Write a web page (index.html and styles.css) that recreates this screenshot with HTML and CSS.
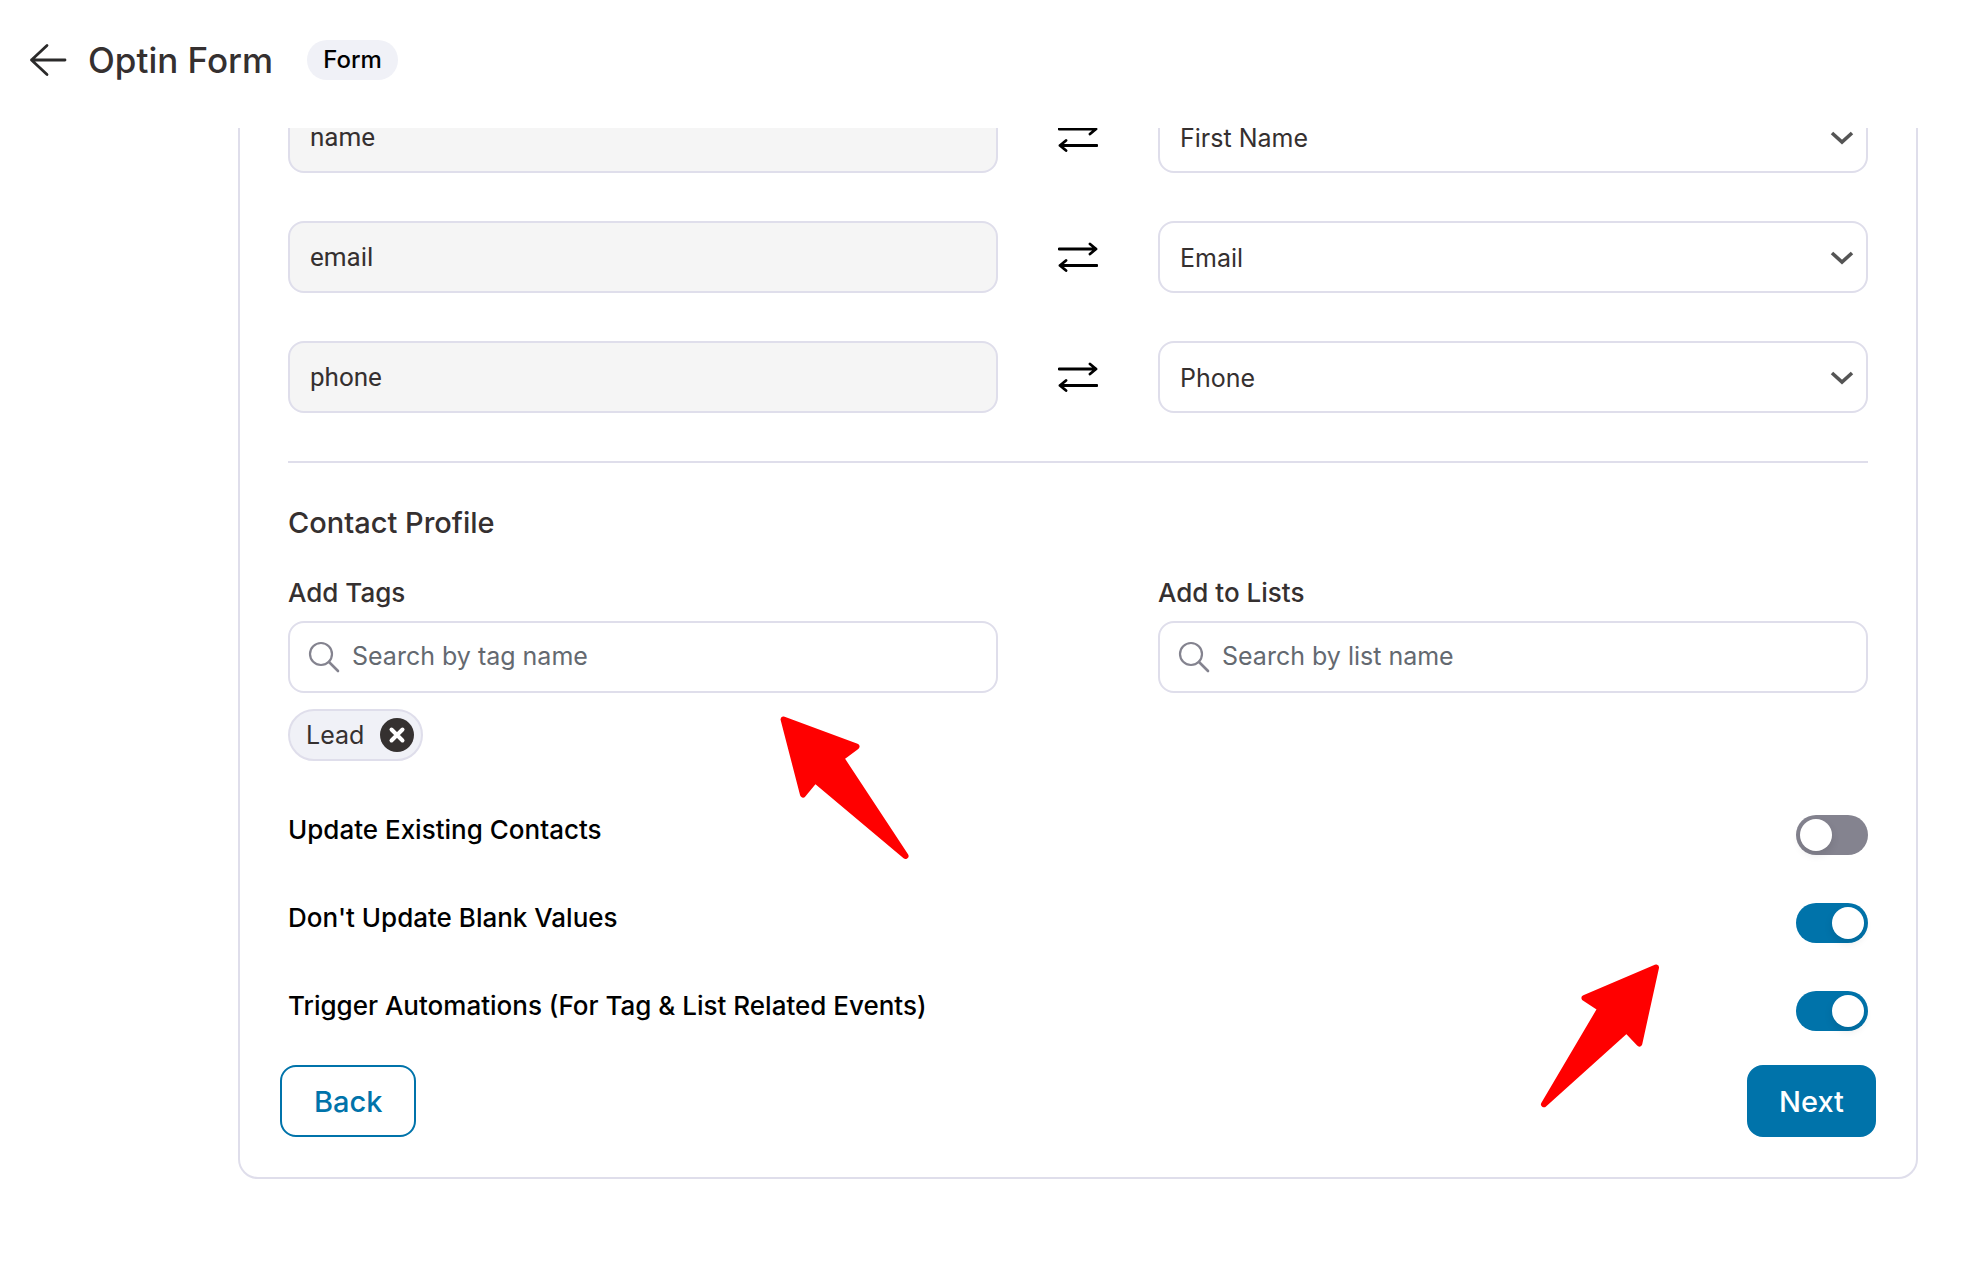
FILE: index.html
```html
<!DOCTYPE html>
<html lang="en">
<head>
<meta charset="utf-8">
<meta name="viewport" content="width=device-width, initial-scale=1">
<title>Optin Form</title>
<link rel="stylesheet" href="styles.css">
</head>
<body>
<svg class="sprite" aria-hidden="true">
  <symbol id="swap" viewBox="0 0 40 32">
    <path d="M1 8H38M32 3L38 8L32 13M39 24.500H2M8 19.500L2 24.500L8 29.500" fill="none" stroke="#000" stroke-width="2.800" stroke-linecap="round" stroke-linejoin="round"/>
  </symbol>
  <symbol id="chevron" viewBox="0 0 24 14">
    <path d="M2 2L12 11L22 2" fill="none" stroke="#555" stroke-width="3.600"/>
  </symbol>
  <symbol id="search" viewBox="0 0 32 32">
    <circle cx="13" cy="13" r="11" fill="none" stroke="#84838f" stroke-width="2.200"/>
    <path d="M21 21L30 30" fill="none" stroke="#84838f" stroke-width="2.600" stroke-linecap="round"/>
  </symbol>
</svg>
<header class="topbar">
  <button class="back-arrow" type="button" aria-label="Go back">
    <svg width="40" height="36" viewBox="0 0 40 36"><path d="M37 18H3.500M19 3.500L3.500 18L19 32.500" fill="none" stroke="#2b2a2a" stroke-width="2.800" stroke-linecap="round" stroke-linejoin="round"/></svg>
  </button>
  <h1 class="title">Optin Form</h1>
  <span class="badge">Form</span>
</header>
<main class="viewport">
  <form class="card">
    <div class="mapping">
      <div class="pair">
        <input class="field source" type="text" value="name" aria-label="Form field: name" disabled>
        <svg class="swap"><use href="#swap"/></svg>
        <div class="picker">
          <select class="field" aria-label="Contact field for name"><option>First Name</option></select>
          <svg class="chevron"><use href="#chevron"/></svg>
        </div>
      </div>
      <div class="pair">
        <input class="field source" type="text" value="email" aria-label="Form field: email" disabled>
        <svg class="swap"><use href="#swap"/></svg>
        <div class="picker">
          <select class="field" aria-label="Contact field for email"><option>Email</option></select>
          <svg class="chevron"><use href="#chevron"/></svg>
        </div>
      </div>
      <div class="pair">
        <input class="field source" type="text" value="phone" aria-label="Form field: phone" disabled>
        <svg class="swap"><use href="#swap"/></svg>
        <div class="picker">
          <select class="field" aria-label="Contact field for phone"><option>Phone</option></select>
          <svg class="chevron"><use href="#chevron"/></svg>
        </div>
      </div>
    </div>
    <section class="profile">
      <h2 class="section-title">Contact Profile</h2>
      <div class="lookups">
        <div class="lookup">
          <label class="label" for="tags">Add Tags</label>
          <div class="search">
            <input class="field" id="tags" type="text" placeholder="Search by tag name">
            <svg class="glass"><use href="#search"/></svg>
          </div>
          <div class="chip">
            <span>Lead</span>
            <button class="chip-remove" type="button" aria-label="Remove Lead">
              <svg width="34" height="34" viewBox="0 0 34 34"><circle cx="17" cy="17" r="17" fill="#353130"/><path d="M11.500 11.500L22.500 22.500M22.500 11.500L11.500 22.500" stroke="#fff" stroke-width="4" stroke-linecap="round"/></svg>
            </button>
          </div>
        </div>
        <div class="lookup">
          <label class="label" for="lists">Add to Lists</label>
          <div class="search">
            <input class="field" id="lists" type="text" placeholder="Search by list name">
            <svg class="glass"><use href="#search"/></svg>
          </div>
        </div>
      </div>
    </section>
    <div class="options">
      <div class="option"><label for="update">Update Existing Contacts</label><input class="toggle" id="update" type="checkbox"></div>
      <div class="option"><label for="blank">Don't Update Blank Values</label><input class="toggle" id="blank" type="checkbox" checked></div>
      <div class="option"><label for="trigger">Trigger Automations (For Tag &amp; List Related Events)</label><input class="toggle" id="trigger" type="checkbox" checked></div>
    </div>
    <div class="actions">
      <button class="button secondary" type="button">Back</button>
      <button class="button primary" type="button">Next</button>
    </div>
    <svg class="pointer pointer-tags" viewBox="776 712 136 152" aria-hidden="true"><path d="M783.600 719.500L856.500 746.500L841 758L905.500 856L815 780L803 794.500Z"/></svg>
    <svg class="pointer pointer-toggles" viewBox="1536 960 128 152" aria-hidden="true"><path d="M1656 967.500L1584.500 998L1600.500 1008.500L1544 1104.300L1626.500 1030L1639.300 1043.500Z"/></svg>
  </form>
</main>
</body>
</html>
```
FILE: styles.css
```css
* {
  box-sizing: border-box;
}

body {
  margin: 0;
  height: 100vh;
  display: flex;
  flex-direction: column;
  overflow: hidden;
  background: #fff;
  color: #353030;
  font-family: Inter, "Liberation Sans", sans-serif;
  font-size: 25px;
}

button,
input,
select {
  font: inherit;
}

.sprite {
  display: none;
}

.topbar {
  flex: none;
  height: 128px;
  padding: 0 28px 8px;
  display: flex;
  align-items: center;
}

.back-arrow {
  display: flex;
  padding: 0;
  border: 0;
  background: none;
}

.title {
  margin: 0 34px 0 20px;
  font-size: 35px;
  font-weight: 500;
}

.badge {
  padding: 0 16px;
  border-radius: 20px;
  background: #f0f1f7;
  color: #000;
  font-size: 24px;
  font-weight: 500;
  line-height: 40px;
}

/* The form is scrolled under the top bar. */
.viewport {
  flex: 1;
  min-height: 0;
  overflow: hidden;
}

.card {
  position: relative;
  margin: -77px 62px 0 238px;
  padding: 48px 48px 40px;
  border: 2px solid #dfdeeb;
  border-radius: 20px;
}

.mapping {
  display: grid;
  gap: 48px;
  padding-bottom: 48px;
  border-bottom: 2px solid #dfdeeb;
}

.pair {
  display: grid;
  grid-template-columns: 1fr 160px 1fr;
  align-items: center;
}

.field {
  width: 100%;
  height: 72px;
  padding: 0 20px;
  border: 2px solid #dfdeeb;
  border-radius: 16px;
  background: #fff;
  color: #353030;
  appearance: none;
}

.source {
  background: #f5f5f5;
  font-family: Roboto, "Liberation Sans", sans-serif;
  font-size: 26px;
}

.swap {
  width: 40px;
  height: 32px;
  justify-self: center;
}

.picker,
.search {
  display: grid;
  align-items: center;
}

.picker > *,
.search > * {
  grid-area: 1 / 1;
}

.picker .field {
  padding-top: 2px;
}

.chevron {
  width: 24px;
  height: 14px;
  margin: 2px 14px 0 0;
  justify-self: end;
  pointer-events: none;
}

.section-title {
  margin: 42px 0 36px;
  font-size: 29px;
  font-weight: 500;
  line-height: 36px;
}

.lookups {
  display: grid;
  grid-template-columns: 1fr 1fr;
  column-gap: 160px;
  align-items: start;
}

.label {
  display: block;
  margin-bottom: 12px;
  font-size: 26px;
  font-weight: 500;
  line-height: 32px;
}

.search .field {
  padding: 0 20px 2px 62px;
}

.search .field::placeholder {
  color: #646970;
}

.glass {
  width: 32px;
  height: 32px;
  margin-left: 20px;
  pointer-events: none;
}

.chip {
  display: flex;
  width: max-content;
  height: 52px;
  margin-top: 16px;
  padding: 0 7px 0 16px;
  align-items: center;
  gap: 16px;
  border: 2px solid #dfdeeb;
  border-radius: 26px;
  background: #f0f1f7;
}

.chip-remove {
  display: flex;
  padding: 0;
  border: 0;
  background: none;
}

.options {
  display: grid;
  gap: 48px;
  margin-top: 54px;
  color: #000;
  font-size: 26px;
  font-weight: 500;
}

.option {
  display: flex;
  justify-content: space-between;
  align-items: flex-start;
  line-height: 30px;
}

.toggle {
  flex: none;
  display: flex;
  width: 72px;
  height: 40px;
  margin: 0;
  padding: 4px;
  border-radius: 20px;
  background: #84838f;
  appearance: none;
}

.toggle::before {
  content: "";
  width: 32px;
  height: 32px;
  border-radius: 50%;
  background: #fff;
  box-shadow: 0 4px 8px rgba(0, 0, 0, 0.1);
}

.toggle:checked {
  justify-content: flex-end;
  background: #0073aa;
}

.actions {
  display: flex;
  justify-content: space-between;
  margin: 34px -8px 0;
}

.button {
  height: 72px;
  padding: 0 32px;
  border: 2px solid #0073aa;
  border-radius: 16px;
  font-size: 29px;
  font-weight: 500;
}

.primary {
  padding: 0 30px;
  background: #0073aa;
  color: #fff;
}

.secondary {
  background: #fff;
  color: #0073aa;
}

.pointer {
  position: absolute;
  height: 152px;
  fill: #f00;
  stroke: #f00;
  stroke-width: 6px;
  stroke-linejoin: round;
  pointer-events: none;
}

.pointer-tags {
  top: 659px;
  left: 536px;
  width: 136px;
}

.pointer-toggles {
  top: 907px;
  right: 252px;
  width: 128px;
}
```
